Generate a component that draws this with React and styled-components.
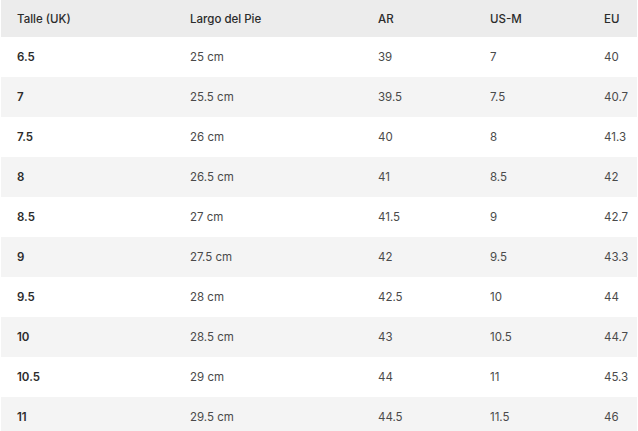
import React from "react";
import styled, { createGlobalStyle } from "styled-components";

const Global = createGlobalStyle`
  html, body { margin: 0; padding: 0; background: #fff; }
  body { font-family: Inter, "Liberation Sans", sans-serif; }
`;

const Table = styled.div`
  width: 636px;
  margin-left: 1px;
  display: flex;
  flex-direction: column;
`;

const Row = styled.div`
  display: grid;
  grid-template-columns: 173px 188px 112px 114px 1fr;
  align-items: center;
  padding-left: 16px;
  height: ${(p) => (p.$head ? "37px" : "40px")};
  background: ${(p) => (p.$head ? "#ececec" : p.$alt ? "#f4f4f4" : "#ffffff")};
`;

const Cell = styled.div`
  font-size: 11.5px;
  line-height: 14px;
  color: ${(p) => (p.$head || p.$strong ? "#2b2b2b" : "#4a4a4a")};
  font-weight: ${(p) => (p.$head ? 500 : p.$strong ? 600 : 400)};
  white-space: nowrap;
`;

const headers = ["Talle (UK)", "Largo del Pie", "AR", "US-M", "EU"];
const data = [
  ["6.5", "25 cm", "39", "7", "40"],
  ["7", "25.5 cm", "39.5", "7.5", "40.7"],
  ["7.5", "26 cm", "40", "8", "41.3"],
  ["8", "26.5 cm", "41", "8.5", "42"],
  ["8.5", "27 cm", "41.5", "9", "42.7"],
  ["9", "27.5 cm", "42", "9.5", "43.3"],
  ["9.5", "28 cm", "42.5", "10", "44"],
  ["10", "28.5 cm", "43", "10.5", "44.7"],
  ["10.5", "29 cm", "44", "11", "45.3"],
  ["11", "29.5 cm", "44.5", "11.5", "46"],
];

export default function App() {
  return (
    <>
      <Global />
      <Table>
        <Row $head>
          {headers.map((h) => (
            <Cell key={h} $head>{h}</Cell>
          ))}
        </Row>
        {data.map((r, i) => (
          <Row key={i} $alt={i % 2 === 1}>
            {r.map((c, j) => (
              <Cell key={j} $strong={j === 0}>{c}</Cell>
            ))}
          </Row>
        ))}
      </Table>
    </>
  );
}
